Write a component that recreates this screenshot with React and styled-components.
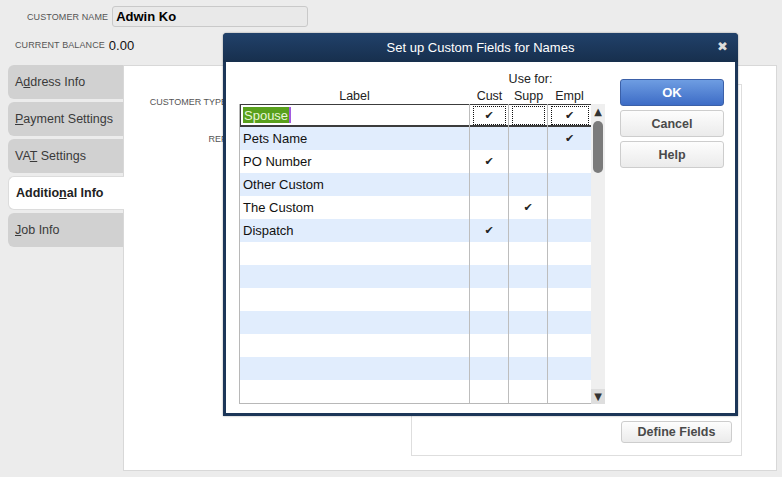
import * as React from "react"
import styled, { createGlobalStyle } from "styled-components"

const GlobalStyle = createGlobalStyle`
    body {
        margin: 0;
        background: #ececec;
        font-family: "Liberation Sans", Arial, sans-serif;
        color: #222;
    }
`

const Page = styled.div`
    position: relative;
    width: 782px;
    height: 477px;
    overflow: hidden;
    background: #ececec;
`

const Header = styled.div`
    padding-top: 6px;
`

const NameRow = styled.div`
    display: flex;
    align-items: center;
    gap: 4px;
    height: 21px;
    padding-left: 27px;
`

const SmallLabel = styled.span`
    font-size: 9px;
    text-transform: uppercase;
    color: #555;
    letter-spacing: 0.1px;
`

const NameInput = styled.div`
    box-sizing: border-box;
    width: 196px;
    height: 21px;
    padding: 2px 3px;
    border: 1px solid #c9c9c9;
    border-radius: 3px;
    background: #e9e9e9;
    font-size: 13px;
    font-weight: 700;
    color: #000;
`

const BalanceRow = styled.div`
    display: flex;
    align-items: center;
    gap: 4px;
    height: 18px;
    margin-top: 9px;
    padding-left: 15px;
`

const BalanceValue = styled.span`
    font-size: 13px;
    color: #111;
`

const Body = styled.div`
    display: flex;
    margin-top: 11px;
    padding-left: 8px;
`

const TabList = styled.div`
    display: flex;
    flex-direction: column;
    gap: 3px;
    width: 115px;
`

const Tab = styled.div`
    box-sizing: border-box;
    height: 34px;
    margin-right: ${p => (p.$active ? "-1px" : "0")};
    padding-left: 7px;
    display: flex;
    align-items: center;
    border-radius: 6px 0 0 6px;
    background: ${p => (p.$active ? "#fff" : "#d1d1d1")};
    border: ${p => (p.$active ? "1px solid #dcdcdc" : "none")};
    border-right: none;
    font-size: 12.5px;
    font-weight: ${p => (p.$active ? 700 : 400)};
    color: ${p => (p.$active ? "#222" : "#3a3a3a")};
    position: relative;
    z-index: 1;
`

const TabText = styled.span`
    white-space: pre;
`

const Panel = styled.div`
    box-sizing: border-box;
    width: 654px;
    height: 406px;
    background: #fff;
    border: 1px solid #d8d8d8;
    display: flex;
    justify-content: space-between;
`

const FieldLabels = styled.div`
    display: flex;
    flex-direction: column;
    align-items: flex-end;
    gap: 27px;
    width: 103px;
    padding-top: 31px;
`

const FieldLabel = styled.span`
    font-size: 9px;
    color: #555;
    text-transform: uppercase;
`

const InfoBox = styled.div`
    box-sizing: border-box;
    width: 331px;
    margin: 18px 34px 14px 0;
    border: 1px solid #dedede;
    display: flex;
    flex-direction: column;
    justify-content: flex-end;
    align-items: flex-end;
    padding: 0 9px 12px 0;
`

const PlainButton = styled.button`
    box-sizing: border-box;
    width: ${p => p.$width || "104px"};
    height: ${p => p.$height || "27px"};
    border: 1px solid #cdcdcd;
    border-radius: 3px;
    background: linear-gradient(#fdfdfd, #ebebeb);
    font-family: "Liberation Sans", Arial, sans-serif;
    font-size: 12.5px;
    font-weight: 700;
    color: #4a4a4a;
    padding: 0;
`

const PrimaryButton = styled(PlainButton)`
    border-color: #3b60a8;
    background: linear-gradient(#6e9de2, #3d6cc6);
    color: #fff;
    font-size: 13px;
`

/* dialog */

const Dialog = styled.div`
    position: absolute;
    left: 223px;
    top: 33px;
    box-sizing: border-box;
    width: 515px;
    height: 383px;
    display: flex;
    flex-direction: column;
    padding: 0 3px 3px;
    background: #1c3658;
    border-radius: 4px 4px 0 0;
    box-shadow: 0 0 2px rgba(0, 0, 0, 0.4);
    z-index: 5;
`

const TitleBar = styled.div`
    position: relative;
    height: 29px;
    margin: 0 -3px;
    display: flex;
    align-items: center;
    justify-content: center;
    border-radius: 4px 4px 0 0;
    background: linear-gradient(#21416a, #172f4d);
    color: #fff;
    font-size: 13px;
`

const Close = styled.span`
    position: absolute;
    right: 10px;
    top: 6px;
    font-size: 13px;
    font-family: "DejaVu Sans", sans-serif;
    font-weight: 700;
    color: #dcdcdc;
`

const DialogBody = styled.div`
    flex: 1;
    display: flex;
    background: #fff;
    padding: 0 13px;
`

const TableArea = styled.div`
    width: 366px;
`

const HeadGrid = styled.div`
    display: grid;
    grid-template-columns: 231px 39px 39px 43px;
    grid-template-rows: 17px 17px;
    padding-top: 8px;
    font-size: 12.5px;
    color: #222;
`

const HeadCell = styled.div`
    display: flex;
    align-items: flex-end;
    justify-content: center;
    padding-bottom: 1px;
    grid-column: ${p => p.$span || "auto"};
`

const GridWrap = styled.div`
    display: flex;
`

const Table = styled.div`
    box-sizing: border-box;
    width: 352px;
    border-left: 1px solid #b8b8b8;
    border-bottom: 1px solid #b8b8b8;
`

const Row = styled.div`
    display: grid;
    grid-template-columns: 230px 39px 39px 43px;
    height: 23px;
    background: ${p => (p.$alt ? "#e1edfd" : "#fff")};
    box-shadow: ${p => (p.$editing ? "inset 0 1px 0 #3c3c3c, inset 0 -2px 0 #3c3c3c, inset 1px 0 0 #3c3c3c" : "none")};
`

const LabelCell = styled.div`
    display: flex;
    align-items: center;
    padding-left: 3px;
    padding-bottom: 1px;
    border-right: 1px solid #bdbdbd;
    font-size: 13px;
    color: #111;
`

const CheckCell = styled.div`
    display: flex;
    align-items: center;
    justify-content: center;
    border-right: ${p => (p.$last ? "none" : "1px solid #bdbdbd")};
    font-size: 11px;
    color: #222;
    font-family: "DejaVu Sans", sans-serif;
`

const FocusBox = styled.div`
    box-sizing: border-box;
    width: calc(100% - 5px);
    height: 19px;
    border: 1px dotted #111;
    display: flex;
    align-items: center;
    justify-content: center;
`

const EditText = styled.span`
    display: inline-flex;
    align-items: center;
    height: 16px;
    padding: 0 1px;
    background: #58a01c;
    color: #e8f6d8;
    border-right: 2px solid #a25be0;
`

const Scrollbar = styled.div`
    width: 14px;
    display: flex;
    flex-direction: column;
    background: #efefef;
`

const ArrowBtn = styled.div`
    height: 15px;
    display: flex;
    align-items: center;
    justify-content: center;
    background: ${p => (p.$shade ? "#dedede" : "transparent")};
    color: #333;
    font-size: 10px;
    font-family: "DejaVu Sans", sans-serif;
`

const Track = styled.div`
    flex: 1;
    padding: 2px 2px 0;
`

const Thumb = styled.div`
    height: 52px;
    border-radius: 5px;
    background: #7b7b7b;
`

const ButtonColumn = styled.div`
    display: flex;
    flex-direction: column;
    gap: 4px;
    margin-left: 15px;
    padding-top: 17px;
`

const rows = [
    { label: "Spouse", cust: true, supp: false, empl: true },
    { label: "Pets Name", empl: true },
    { label: "PO Number", cust: true },
    { label: "Other Custom" },
    { label: "The Custom", supp: true },
    { label: "Dispatch", cust: true },
    {}, {}, {}, {}, {}, {}, {},
]

const tabs = [
    ["A", "d", "dress Info"],
    ["", "P", "ayment Settings"],
    ["VA", "T", " Settings"],
    ["Additio", "n", "al Info"],
    ["", "J", "ob Info"],
]

const Check = ({ on }) => (on ? "✔" : "")

const App = () => {
    return (
        <Page>
            <GlobalStyle />
            <Header>
                <NameRow>
                    <SmallLabel>Customer Name</SmallLabel>
                    <NameInput>Adwin Ko</NameInput>
                </NameRow>
                <BalanceRow>
                    <SmallLabel>Current Balance</SmallLabel>
                    <BalanceValue>0.00</BalanceValue>
                </BalanceRow>
            </Header>

            <Body>
                <TabList>
                    {tabs.map(([a, key, b], i) => (
                        <Tab key={i} $active={i === 3}>
                            <TabText>{a}<u>{key}</u>{b}</TabText>
                        </Tab>
                    ))}
                </TabList>
                <Panel>
                    <FieldLabels>
                        <FieldLabel>Customer Type</FieldLabel>
                        <FieldLabel>Rep</FieldLabel>
                    </FieldLabels>
                    <InfoBox>
                        <PlainButton $width="111px" $height="22px">Define Fields</PlainButton>
                    </InfoBox>
                </Panel>
            </Body>

            <Dialog>
                <TitleBar>
                    Set up Custom Fields for Names
                    <Close>✖</Close>
                </TitleBar>
                <DialogBody>
                    <TableArea>
                        <HeadGrid>
                            <HeadCell $span="2 / 5">Use for:</HeadCell>
                            <HeadCell>Label</HeadCell>
                            <HeadCell>Cust</HeadCell>
                            <HeadCell>Supp</HeadCell>
                            <HeadCell>Empl</HeadCell>
                        </HeadGrid>
                        <GridWrap>
                            <Table>
                                {rows.map((r, i) =>
                                    i === 0 ? (
                                        <Row key={i} $editing>
                                            <LabelCell>
                                                <EditText>{r.label}</EditText>
                                            </LabelCell>
                                            <CheckCell><FocusBox><Check on={r.cust} /></FocusBox></CheckCell>
                                            <CheckCell><FocusBox><Check on={r.supp} /></FocusBox></CheckCell>
                                            <CheckCell $last><FocusBox><Check on={r.empl} /></FocusBox></CheckCell>
                                        </Row>
                                    ) : (
                                        <Row key={i} $alt={i % 2 === 1}>
                                            <LabelCell>{r.label}</LabelCell>
                                            <CheckCell><Check on={r.cust} /></CheckCell>
                                            <CheckCell><Check on={r.supp} /></CheckCell>
                                            <CheckCell $last><Check on={r.empl} /></CheckCell>
                                        </Row>
                                    )
                                )}
                            </Table>
                            <Scrollbar>
                                <ArrowBtn>▲</ArrowBtn>
                                <Track><Thumb /></Track>
                                <ArrowBtn $shade>▼</ArrowBtn>
                            </Scrollbar>
                        </GridWrap>
                    </TableArea>
                    <ButtonColumn>
                        <PrimaryButton>OK</PrimaryButton>
                        <PlainButton>Cancel</PlainButton>
                        <PlainButton>Help</PlainButton>
                    </ButtonColumn>
                </DialogBody>
            </Dialog>
        </Page>
    )
}

export default App
